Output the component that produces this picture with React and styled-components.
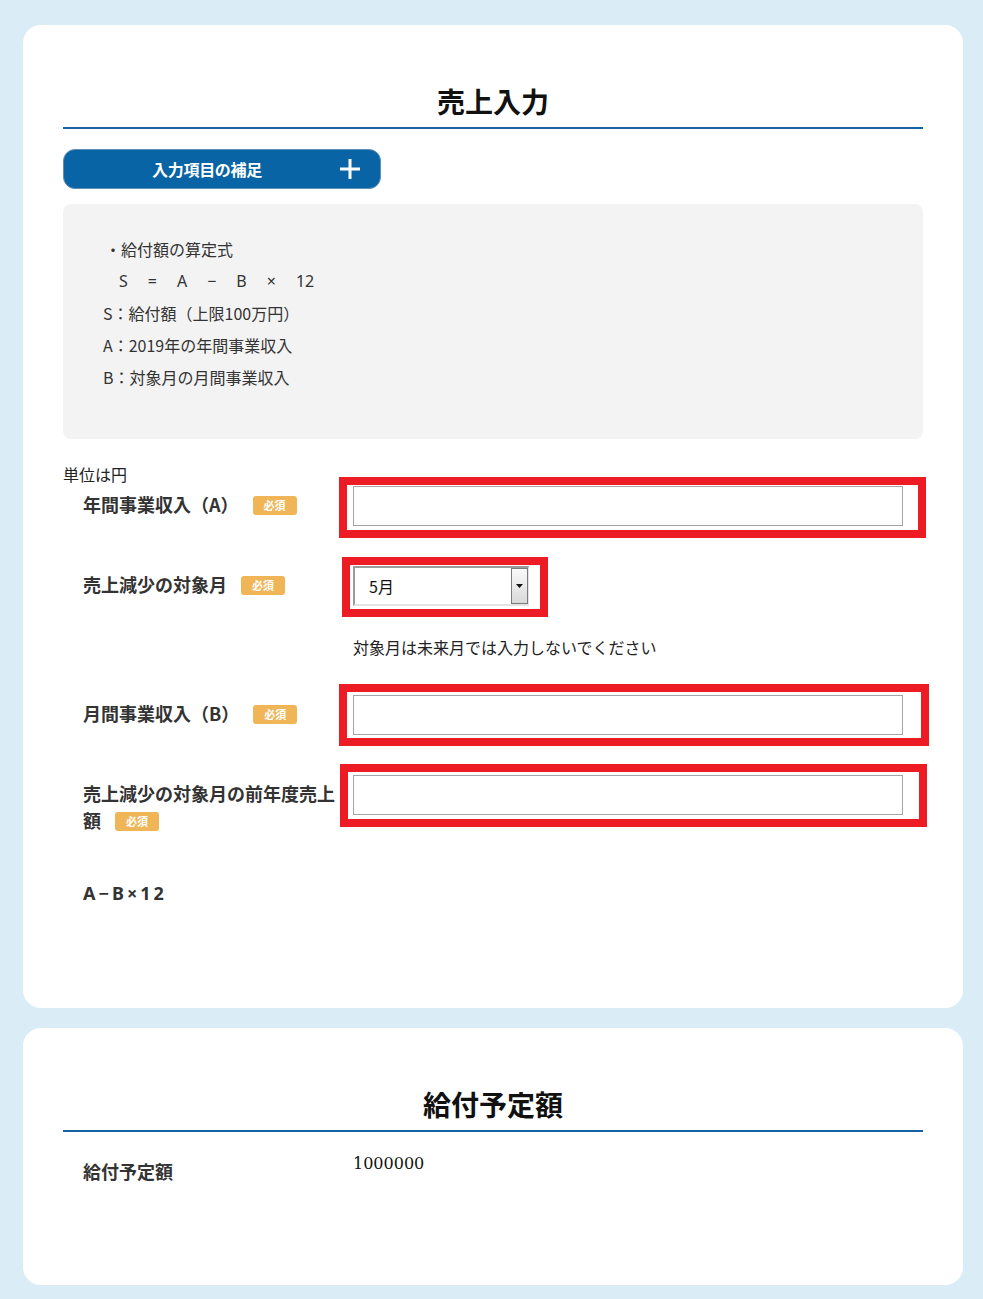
import React from 'react'
import styled, { createGlobalStyle } from 'styled-components'

const GlobalStyle = createGlobalStyle`
  html, body {
    margin: 0;
    padding: 0;
    background: #daedf7;
  }
  body {
    font-family: "Noto Sans CJK JP", "Noto Sans", sans-serif;
    color: #333;
  }
`;

function App() {
  return (
    <>
      <GlobalStyle />
      <Page>
        <Card>
          <Title>売上入力</Title>
          <ToggleButton type="button">
            入力項目の補足
            <PlusIcon viewBox="0 0 20 20">
              <path d="M10 0v20M0 10h20" stroke="#fff" strokeWidth="3" />
            </PlusIcon>
          </ToggleButton>
          <InfoBox>
            <InfoLine indent={2}>・給付額の算定式</InfoLine>
            <Formula>
              <span>S</span><span>=</span><span>A</span><span>−</span><span>B</span><span>×</span><span>12</span>
            </Formula>
            <InfoLine>S：給付額（上限100万円）</InfoLine>
            <InfoLine>A：2019年の年間事業収入</InfoLine>
            <InfoLine>B：対象月の月間事業収入</InfoLine>
          </InfoBox>

          <Unit>単位は円</Unit>

          <Row>
            <Label>年間事業収入（A）<Required>必須</Required></Label>
            <Field>
              <Marked>
                <TextInput type="text" />
                <RedFrame $t={9} $r={23} $b={12} $l={14} />
              </Marked>
            </Field>
          </Row>

          <Row $gap={40}>
            <Label>売上減少の対象月<Required>必須</Required></Label>
            <Field>
              <Marked>
                <SelectBox>
                  <SelectValue>5月</SelectValue>
                  <ArrowBox>
                    <svg width="7" height="4" viewBox="0 0 7 4">
                      <path d="M0 0h7L3.5 4z" fill="#111" />
                    </svg>
                  </ArrowBox>
                </SelectBox>
                <RedFrame $t={9} $r={19} $b={11} $l={11} />
              </Marked>
              <Note>対象月は未来月では入力しないでください</Note>
            </Field>
          </Row>

          <Row $gap={37}>
            <Label>月間事業収入（B）<Required>必須</Required></Label>
            <Field>
              <Marked>
                <TextInput type="text" />
                <RedFrame $t={11} $r={26} $b={11} $l={14} />
              </Marked>
            </Field>
          </Row>

          <Row $gap={40}>
            <Label>売上減少の対象月の前年度売上額<Required>必須</Required></Label>
            <Field>
              <Marked>
                <TextInput type="text" />
                <RedFrame $t={11} $r={24} $b={12} $l={13} />
              </Marked>
            </Field>
          </Row>

          <Result>A−B×12</Result>
        </Card>

        <Card $bottom={100}>
          <Title>給付予定額</Title>
          <Row $gap={21}>
            <Label>給付予定額</Label>
            <Value>1000000</Value>
          </Row>
        </Card>
      </Page>
    </>
  )
}

const Page = styled.div`
  display: flex;
  flex-direction: column;
  gap: 20px;
  padding: 25px 20px 14px 23px;
`;

const Card = styled.section`
  width: 940px;
  box-sizing: border-box;
  background: #fff;
  border-radius: 18px;
  padding: 0 40px ${p => p.$bottom || 101}px;
`;

const Title = styled.h2`
  margin: 0;
  padding: 56px 0 6px;
  line-height: 40px;
  font-size: 28px;
  font-weight: 700;
  color: #111;
  text-align: center;
  border-bottom: 2px solid #1563a5;
`;

const ToggleButton = styled.button`
  position: relative;
  display: flex;
  align-items: center;
  justify-content: center;
  width: 318px;
  height: 40px;
  margin-top: 20px;
  padding: 0 30px 0 0;
  box-sizing: border-box;
  background: #0964a6;
  border: 1px solid #5f8fb8;
  border-radius: 12px;
  color: #fff;
  font-family: inherit;
  font-size: 16px;
  font-weight: 700;
  letter-spacing: -0.3px;
`;

const PlusIcon = styled.svg`
  position: absolute;
  right: 20px;
  top: 9px;
  width: 20px;
  height: 20px;
`;

const InfoBox = styled.div`
  margin-top: 15px;
  padding: 29px 40px 46px;
  background: #f3f3f3;
  border-radius: 8px;
  font-size: 16px;
  line-height: 32px;
  color: #333;
`;

const InfoLine = styled.div`
  padding-left: ${p => p.indent || 0}px;
`;

const Formula = styled.div`
  display: flex;
  gap: 20px;
  padding-left: 16px;
  font-family: "Noto Sans", sans-serif;
`;

const Unit = styled.div`
  margin-top: 23px;
  font-size: 16px;
  line-height: 24px;
  color: #222;
`;

const Row = styled.div`
  display: grid;
  grid-template-columns: 256px 1fr;
  column-gap: 14px;
  padding-left: 20px;
  margin-top: ${p => p.$gap || 0}px;
`;

const Label = styled.div`
  padding-top: 5px;
  font-size: 18px;
  line-height: 27px;
  font-weight: 700;
  color: #333;
`;

const Required = styled.span`
  display: inline-block;
  margin-left: 14px;
  width: 44px;
  height: 19px;
  line-height: 19px;
  border-radius: 3px;
  background: #f0b556;
  color: #fff;
  font-size: 11px;
  font-weight: 700;
  text-align: center;
  vertical-align: 2px;
`;

const Field = styled.div`
  display: flex;
  flex-direction: column;
  align-items: flex-start;
`;

const Marked = styled.div`
  position: relative;
`;

const RedFrame = styled.span`
  position: absolute;
  top: -${p => p.$t}px;
  right: -${p => p.$r}px;
  bottom: -${p => p.$b}px;
  left: -${p => p.$l}px;
  border: 8px solid #ed1c24;
  pointer-events: none;
`;

const TextInput = styled.input`
  display: block;
  width: 550px;
  height: 40px;
  box-sizing: border-box;
  margin: 0;
  border: 1px solid #a3a3a3;
  background: #fff;
  font-size: 16px;
`;

const SelectBox = styled.div`
  display: flex;
  align-items: center;
  width: 176px;
  height: 40px;
  box-sizing: border-box;
  border-top: 2px solid #9b9b9b;
  border-left: 2px solid #9b9b9b;
  border-right: 1px solid #e3e3e3;
  border-bottom: 2px solid #e3e3e3;
  background: #fff;
`;

const SelectValue = styled.span`
  flex: 1;
  padding-left: 14px;
  font-size: 16px;
  color: #111;
`;

const ArrowBox = styled.span`
  display: flex;
  align-items: center;
  justify-content: center;
  width: 17px;
  height: 36px;
  box-sizing: border-box;
  border: 1px solid #7a7a7a;
  background: linear-gradient(#fafafa, #d9d9d9);
`;

const Note = styled.p`
  margin: 30px 0 0;
  font-size: 16px;
  line-height: 22px;
  color: #222;
`;

const Result = styled.div`
  margin-top: 46px;
  padding-left: 20px;
  font-family: "Noto Sans", sans-serif;
  font-size: 18px;
  line-height: 27px;
  font-weight: 700;
  letter-spacing: 3px;
  color: #333;
`;

const Value = styled.div`
  font-family: "DejaVu Serif", serif;
  font-size: 16px;
  line-height: 22px;
  color: #111;
`;

export default App
